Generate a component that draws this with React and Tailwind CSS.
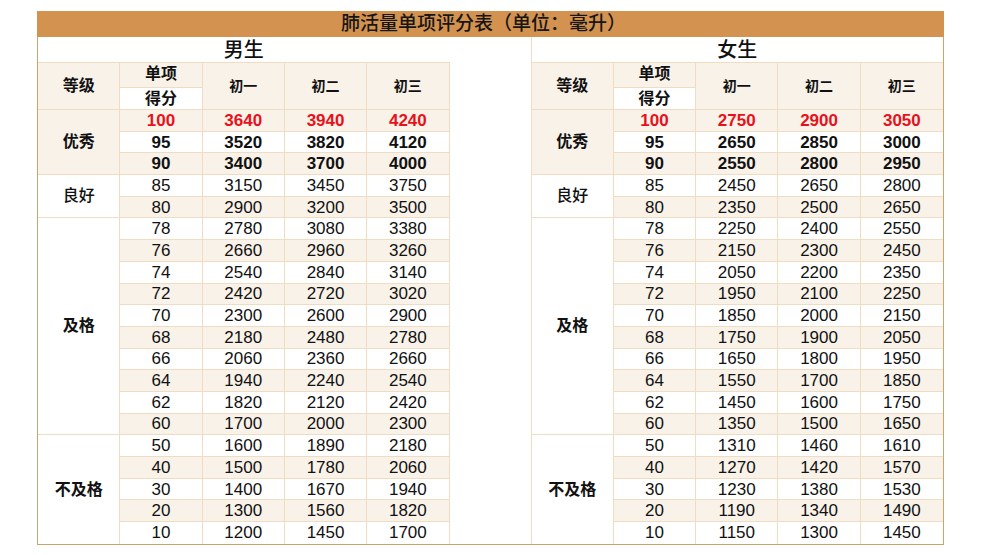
import React from "react";

const maleGroups = [
  { label: "优秀", strong: true, shade: true, rows: [[100, 3640, 3940, 4240], [95, 3520, 3820, 4120], [90, 3400, 3700, 4000]] },
  { label: "良好", strong: false, shade: false, rows: [[85, 3150, 3450, 3750], [80, 2900, 3200, 3500]] },
  {
    label: "及格", strong: true, shade: false, rows: [
      [78, 2780, 3080, 3380], [76, 2660, 2960, 3260], [74, 2540, 2840, 3140], [72, 2420, 2720, 3020], [70, 2300, 2600, 2900],
      [68, 2180, 2480, 2780], [66, 2060, 2360, 2660], [64, 1940, 2240, 2540], [62, 1820, 2120, 2420], [60, 1700, 2000, 2300],
    ],
  },
  { label: "不及格", strong: true, shade: false, rows: [[50, 1600, 1890, 2180], [40, 1500, 1780, 2060], [30, 1400, 1670, 1940], [20, 1300, 1560, 1820], [10, 1200, 1450, 1700]] },
];

const femaleGroups = [
  { label: "优秀", strong: true, shade: true, rows: [[100, 2750, 2900, 3050], [95, 2650, 2850, 3000], [90, 2550, 2800, 2950]] },
  { label: "良好", strong: false, shade: false, rows: [[85, 2450, 2650, 2800], [80, 2350, 2500, 2650]] },
  {
    label: "及格", strong: true, shade: false, rows: [
      [78, 2250, 2400, 2550], [76, 2150, 2300, 2450], [74, 2050, 2200, 2350], [72, 1950, 2100, 2250], [70, 1850, 2000, 2150],
      [68, 1750, 1900, 2050], [66, 1650, 1800, 1950], [64, 1550, 1700, 1850], [62, 1450, 1600, 1750], [60, 1350, 1500, 1650],
    ],
  },
  { label: "不及格", strong: true, shade: false, rows: [[50, 1310, 1460, 1610], [40, 1270, 1420, 1570], [30, 1230, 1380, 1530], [20, 1190, 1340, 1490], [10, 1150, 1300, 1450]] },
];

const spanClass = { 2: "row-span-2", 3: "row-span-3", 5: "row-span-5", 10: "row-span-10" };

function Table({ title, groups, isRight }) {
  const lastR = isRight ? "border-r-0" : "border-r";
  let idx = 0;
  const cells = [];
  groups.forEach((g, gi) => {
    const lastGroup = gi === groups.length - 1;
    cells.push(
      <div
        key={`g${gi}`}
        className={`${spanClass[g.rows.length]} flex items-center justify-center border-r border-[#f1dcc1] text-[16px] text-[#111] ${
          lastGroup ? "border-b-0" : "border-b"
        } ${g.strong ? "font-bold" : "font-medium"} ${g.shade ? "bg-[#f9f2e9]" : "bg-white"}`}
      >
        {g.label}
      </div>
    );
    g.rows.forEach((r) => {
      const i = idx++;
      const isLast = i === 19;
      const bg = i % 2 === 0 ? "bg-[#f9f2e9]" : "bg-white";
      const weight = i < 3 ? "font-bold" : "font-normal";
      const color = i === 0 ? "text-[#e8111b]" : "text-[#111]";
      r.forEach((v, ci) => {
        cells.push(
          <div
            key={`r${i}c${ci}`}
            className={`flex items-center justify-center border-[#f1dcc1] text-[17px] leading-none ${bg} ${weight} ${color} ${
              isLast ? "border-b-0" : "border-b"
            } ${ci === 3 ? lastR : "border-r"}`}
          >
            {v}
          </div>
        );
      });
    });
  });

  return (
    <div className="grid flex-1 grid-cols-5 grid-rows-[26px_25px_22px_repeat(20,21.7px)]">
      <div className="col-span-5 flex items-center justify-center border-b border-[#f1dcc1] bg-white text-[20px] font-medium text-[#111]">
        {title}
      </div>
      <div className="row-span-2 flex items-center justify-center border-b border-r border-[#f1dcc1] bg-[#f9f2e9] text-[16px] font-bold text-[#111]">等级</div>
      <div className="flex items-end justify-center border-b border-r border-[#f1dcc1] bg-[#f9f2e9] pb-[1px] text-[16px] font-bold text-[#111]">单项</div>
      <div className="row-span-2 flex items-center justify-center border-b border-r border-[#f1dcc1] bg-[#f9f2e9] text-[14px] font-bold text-[#111]">初一</div>
      <div className="row-span-2 flex items-center justify-center border-b border-r border-[#f1dcc1] bg-[#f9f2e9] text-[14px] font-bold text-[#111]">初二</div>
      <div className={`row-span-2 flex items-center justify-center border-b border-[#f1dcc1] bg-[#f9f2e9] text-[14px] font-bold text-[#111] ${lastR}`}>初三</div>
      <div className="flex items-center justify-center border-b border-r border-[#f1dcc1] bg-white text-[16px] font-bold text-[#111]">得分</div>
      {cells}
    </div>
  );
}

export default function App() {
  return (
    <div className="min-h-[555px] w-[994px] bg-white font-['Liberation_Sans','Noto_Sans_CJK_SC',sans-serif]">
      <div className="ml-[37px] w-[907px] pt-[11px]">
        <div className="flex h-[26px] items-center justify-center bg-[#d39250] pr-[14px] text-[19px] font-medium text-[#161616]">
          肺活量单项评分表（单位：毫升）
        </div>
        <div className="flex border-b border-l border-r border-[#c9a46c]">
          <Table title="男生" groups={maleGroups} isRight={false} />
          <div className="w-[82px] shrink-0 border-r border-[#f1dcc1] bg-white"></div>
          <Table title="女生" groups={femaleGroups} isRight={true} />
        </div>
      </div>
    </div>
  );
}
